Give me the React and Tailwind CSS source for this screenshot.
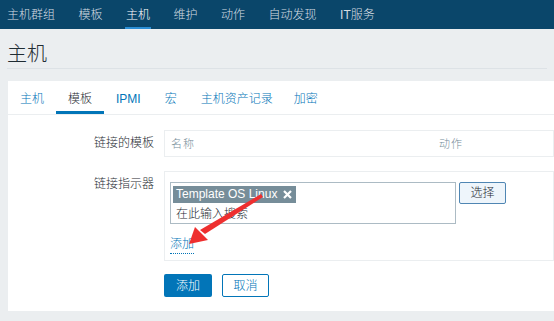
import React from 'react'

const NAV = ['主机群组', '模板', '主机', '维护', '动作', '自动发现', 'IT服务']
const TABS = ['主机', '模板', 'IPMI', '宏', '主机资产记录', '加密']

const font = { fontFamily: '"Liberation Sans", "Noto Sans CJK SC", sans-serif' }

function Arrow() {
  return (
    <svg className="pointer-events-none absolute left-0 top-0" width="554" height="321">
      <polygon points="261,194 263,197 205,234 200,230" fill="#ee2f2f" />
      <polygon points="189,244 195,227 208,240" fill="#ee2f2f" />
    </svg>
  )
}

export default function App() {
  return (
    <div
      className="relative h-[321px] w-[554px] overflow-hidden bg-[#ebeef0] text-[12px] font-light text-[#1f2c33]"
      style={font}
    >
      <div className="flex h-[29px] gap-[23.5px] bg-[#0a466a] pl-[7px]">
        {NAV.map((n) => (
          <div
            key={n}
            className={`relative flex items-center ${n === '主机' ? 'text-white' : 'text-[#d5dde2]'}`}
          >
            {n}
            {n === '主机' && <div className="absolute -left-px bottom-0 h-[2px] w-[26px] bg-[#2b8fd6]" />}
          </div>
        ))}
      </div>

      <div className="mx-[7px] flex h-[40px] items-end border-b border-[#dde2e6] pb-[2px]">
        <h1 className="text-[20px] leading-[24px] text-[#1f2c33]">主机</h1>
      </div>

      <div className="ml-[8px] mt-[12px] h-[230px] bg-white">
        <div className="flex h-[34px] border-b border-[#ebeef0]">
          {TABS.map((t) => (
            <div
              key={t}
              className={`flex items-center px-3 pt-[3px] ${
                t === '模板' ? 'border-b-[3px] border-[#0275b8] pt-[6px] text-[#1f2c33]' : 'text-[#0275b8]'
              } ${t === '加密' ? 'pl-[9px]' : ''}`}
            >
              {t}
            </div>
          ))}
        </div>

        <div className="mt-[15px] flex">
          <div className="w-[146px] shrink-0 pt-[4px] text-right">链接的模板</div>
          <div className="ml-[10px] flex h-[27px] flex-1 items-center border border-[#ebeef0] pl-[6px] pt-[1px] text-[11px] tracking-[1px] text-[#768d99]">
            <span className="w-[268px]">名称</span>
            <span>动作</span>
          </div>
        </div>

        <div className="mt-[14px] flex">
          <div className="w-[146px] shrink-0 pt-[4px] text-right">链接指示器</div>
          <div className="ml-[10px] h-[90px] flex-1 border border-[#ebeef0] pl-[5px] pt-[10px]">
            <div className="flex items-start gap-[3px]">
              <div className="h-[42px] w-[286px] border border-[#acbbc4] px-[2px] pt-[2px]">
                <div className="inline-flex h-[17px] items-center gap-[6px] bg-[#768d99] pl-[3px] pr-[4px] text-[12px] font-normal text-white">
                  Template OS Linux
                  <svg width="9" height="9" viewBox="0 0 9 9">
                    <path d="M1 1 L8 8 M8 1 L1 8" stroke="white" strokeWidth="2.2" />
                  </svg>
                </div>
                <div className="pl-[3px] pt-[2px] text-[12px] text-[#1f2c33]">在此输入搜索</div>
              </div>
              <button className="h-[22px] w-[47px] rounded-[2px] border border-[#4f86b3] bg-[#eef5fb] text-[12px] text-[#1f2c33]">
                选择
              </button>
            </div>
            <div className="mt-[12px] inline-block border-b border-dotted border-[#0275b8] leading-[17px] text-[#0275b8]">
              添加
            </div>
          </div>
        </div>

        <div className="ml-[156px] mt-[13px] flex gap-[10px]">
          <button className="h-[23px] w-[48px] rounded-[2px] bg-[#0275b8] text-white">添加</button>
          <button className="h-[23px] w-[47px] rounded-[2px] border border-[#0275b8] bg-white text-[#0275b8]">
            取消
          </button>
        </div>
      </div>

      <Arrow />
    </div>
  )
}
